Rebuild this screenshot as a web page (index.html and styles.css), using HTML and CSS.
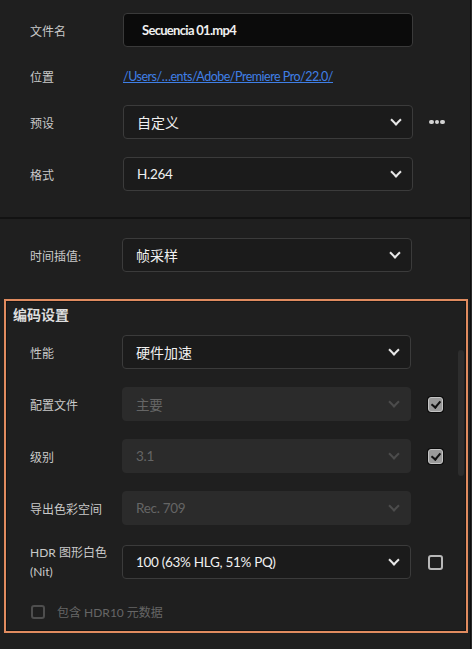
FILE: index.html
```html
<!DOCTYPE html>
<html lang="zh-CN">
<head>
    <meta charset="UTF-8">
    <meta name="viewport" content="width=device-width, initial-scale=1.0">
    <title>导出设置</title>
    <link rel="stylesheet" href="styles.css">
</head>
<body>
    <div class="panel">
        <div class="top">
            <div class="row">
                <div class="label">文件名</div>
                <div class="field input">Secuencia 01.mp4</div>
            </div>
            <div class="row">
                <div class="label">位置</div>
                <a class="link" href="#">/Users/…ents/Adobe/Premiere Pro/22.0/</a>
            </div>
            <div class="row">
                <div class="label">预设</div>
                <div class="field select"><span class="big">自定义</span><i class="chev"></i></div>
                <div class="more"><b></b><b></b><b></b></div>
            </div>
            <div class="row gap">
                <div class="label">格式</div>
                <div class="field select">H.264<i class="chev"></i></div>
            </div>
        </div>
        <div class="sep"></div>
        <div class="interp">
            <div class="row">
                <div class="label">时间插值:</div>
                <div class="field select"><span class="big">帧采样</span><i class="chev"></i></div>
            </div>
        </div>

        <div class="encode">
            <div class="thumb"></div>
            <div class="head">编码设置</div>
            <div class="row">
                <div class="label">性能</div>
                <div class="field select"><span class="big">硬件加速</span><i class="chev"></i></div>
            </div>
            <div class="row gap">
                <div class="label">配置文件</div>
                <div class="field select off">主要<i class="chev"></i></div>
                <div class="check on"></div>
            </div>
            <div class="row gap">
                <div class="label">级别</div>
                <div class="field select off">3.1<i class="chev"></i></div>
                <div class="check on"></div>
            </div>
            <div class="row gap">
                <div class="label">导出色彩空间</div>
                <div class="field select off">Rec. 709<i class="chev"></i></div>
            </div>
            <div class="row gap2">
                <div class="label two">HDR 图形白色<br>(Nit)</div>
                <div class="field select">100 (63% HLG, 51% PQ)<i class="chev"></i></div>
                <div class="check"></div>
            </div>
            <div class="opt">
                <div class="check dim"></div>
                <span>包含 HDR10 元数据</span>
            </div>
        </div>
    </div>
</body>
</html>
```

FILE: styles.css
```css
body {
    margin: 0;
    background: #2a2a2a;
    font-family: Lato, "Noto Sans CJK SC", sans-serif;
    color: #c9c9c9;
    font-size: 12px;
}
.panel {
    width: 470px;
    height: 649px;
    background: #1f1f1f;
    border-right: 1px solid #0e0e0e;
    overflow: hidden;
}
.top {
    padding: 13px 0 26px 30px;
    display: flex;
    flex-direction: column;
    gap: 12px;
}
.top .row.gap { margin-top: 6px; }
.row {
    display: flex;
    align-items: center;
    height: 34px;
}
.label {
    width: 93px;
    flex: none;
}
.label.two { line-height: 19px; }
.field {
    width: 290px;
    height: 34px;
    box-sizing: border-box;
    border-radius: 4px;
    display: flex;
    align-items: center;
    padding-left: 13px;
    font-size: 13.5px;
    color: #f0f0f0;
    letter-spacing: -0.3px;
}
.big { font-size: 14px; letter-spacing: 0; }
.input {
    background: #0b0b0b;
    border: 1px solid #3a3a3a;
    padding-left: 18px;
    font-weight: 700;
    font-size: 13px;
    letter-spacing: -0.7px;
}
.link {
    color: #3f7fe6;
    font-size: 12.5px;
    letter-spacing: -0.5px;
}
.select {
    background: #1b1b1b;
    border: 1px solid #3b3b3b;
    justify-content: space-between;
    padding-right: 12px;
}
.select.off {
    background: #2b2b2b;
    border-color: #2b2b2b;
    color: #656565;
}
.chev {
    width: 6px;
    height: 6px;
    border-right: 2px solid #e8e8e8;
    border-bottom: 2px solid #e8e8e8;
    transform: translateY(-2px) rotate(45deg);
}
.off .chev { border-color: #4c4c4c; }
.more {
    display: flex;
    gap: 1px;
    margin-left: 16px;
}
.more b {
    width: 4.5px;
    height: 4.5px;
    border-radius: 50%;
    background: #d2d2d2;
}
.sep {
    height: 2px;
    background: #121212;
}
.interp {
    padding: 19px 0 27px 30px;
}
.interp .label { width: 92px; }
.encode {
    position: relative;
    margin-left: 4px;
    width: 464px;
    height: 334px;
    box-sizing: border-box;
    border: 2px solid #e08b5f;
    box-shadow: inset 0 0 0 1px #141414;
    padding: 4px 0 0 24px;
    display: flex;
    flex-direction: column;
}
.head {
    margin-left: -17px;
    font-size: 14px;
    font-weight: 700;
    color: #dedede;
    line-height: 20px;
    margin-bottom: 10px;
}
.encode .label { width: 92px; }
.encode .field { width: 289px; }
.encode .row.gap { margin-top: 18px; }
.encode .row.gap2 { margin-top: 20px; }
.thumb {
    position: absolute;
    right: 2px;
    top: 49px;
    width: 6px;
    height: 126px;
    border-radius: 3px;
    background: #2d2d2d;
}
.check {
    width: 15px;
    height: 15px;
    box-sizing: border-box;
    border: 2px solid #b8b8b8;
    border-radius: 3px;
    margin-left: 17px;
    position: relative;
}
.check.on {
    background: #9a9a9a;
    border: 1px solid #c4c4c4;
    box-shadow: 0 0 0 1px #0c0c0c;
}
.check.on::after {
    content: "";
    position: absolute;
    left: 4px;
    top: 1px;
    width: 4px;
    height: 7px;
    border-right: 2px solid #111;
    border-bottom: 2px solid #111;
    transform: rotate(40deg);
}
.check.dim {
    border-color: #4e4e4e;
    margin-left: 0;
    width: 14px;
    height: 14px;
}
.opt {
    display: flex;
    align-items: center;
    gap: 12px;
    margin-top: 24px;
    margin-left: 1px;
    color: #666;
    font-size: 12px;
}
```
